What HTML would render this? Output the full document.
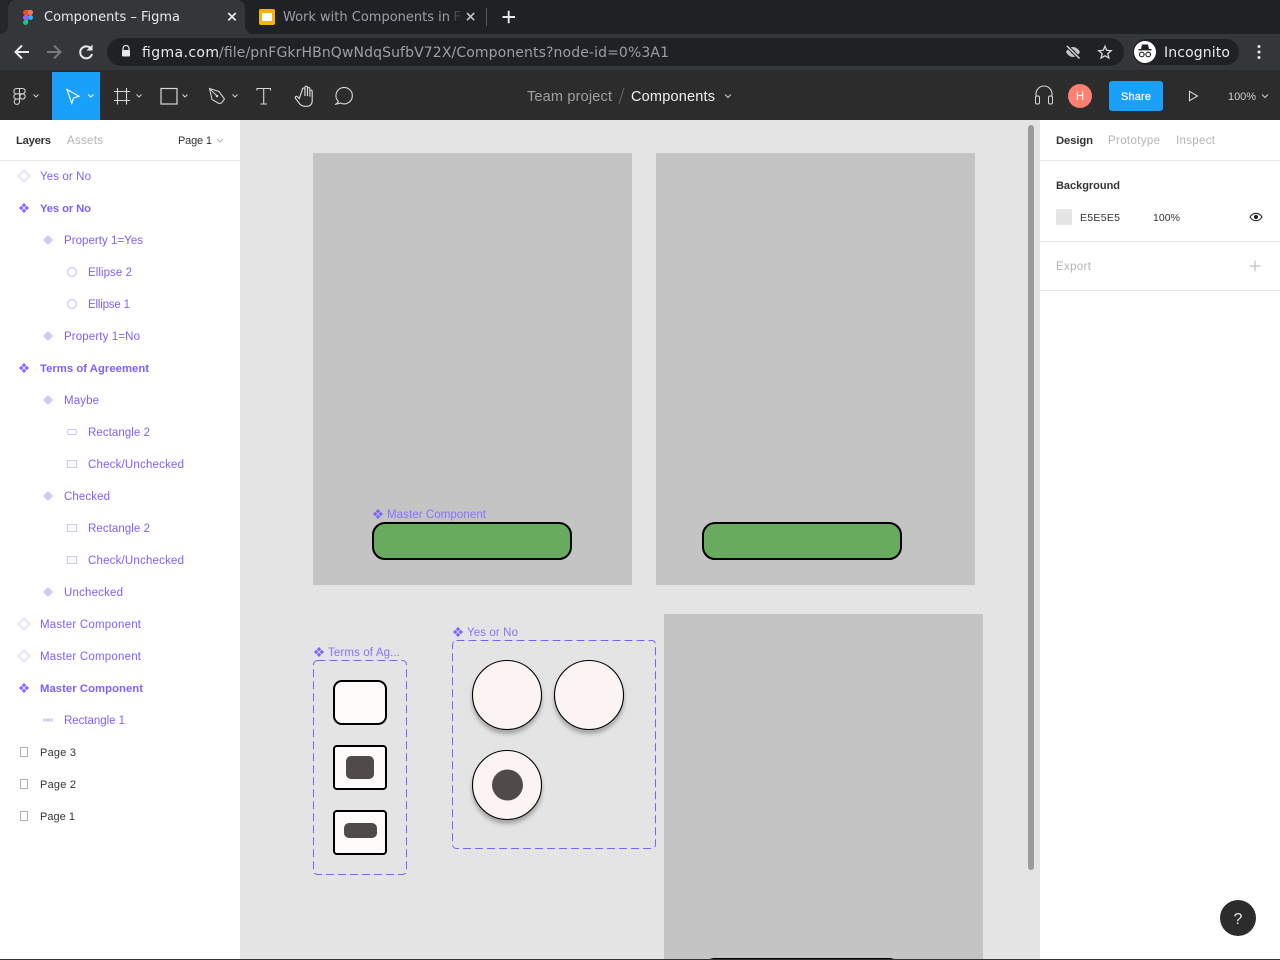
<!DOCTYPE html>
<html><head><meta charset="utf-8"><title>Components – Figma</title>
<style>
html,body{margin:0;padding:0;width:1280px;height:960px;overflow:hidden;background:#e5e5e5}
svg{display:block;position:absolute;left:0;top:0}
.c{font-family:"DejaVu Sans",sans-serif}
.f{font-family:"Liberation Sans",sans-serif}
.l{font-family:"Liberation Sans",sans-serif;font-size:11.5px;fill:#7b61ff}
.b{font-weight:700;font-size:11.3px}
.k{fill:#333}
.ic{fill:none;stroke:#cfc6ff;stroke-width:1.2}
.ch{fill:none;stroke:#b0b0b0;stroke-width:1}
</style></head><body>
<svg width="1280" height="960" viewBox="0 0 1280 960" xmlns="http://www.w3.org/2000/svg">
<defs>
<filter id="s" x="-30%" y="-30%" width="160%" height="170%"><feDropShadow dx="0" dy="4" stdDeviation="2" flood-color="#000" flood-opacity=".28"/></filter>
<g id="comp"><path d="M0-5 2.2-2.8 0-.6-2.2-2.8ZM0 .6 2.2 2.8 0 5-2.2 2.8ZM-2.800-2.200-.6 0-2.800 2.200-5 0ZM2.800-2.200 5 0 2.800 2.200.6 0Z" fill="#7b61ff"/></g>
<g id="inst"><path d="M0-5 5 0 0 5-5 0Z" fill="#cfc6ff"/></g>
<g id="hollow"><path d="M0-5.500 5.500 0 0 5.500-5.500 0Z" fill="none" stroke="#d7d0ff" stroke-width="1.100"/></g>
</defs>

<!-- browser chrome -->
<rect width="1280" height="34" fill="#202124"/>
<rect x="0" y="34" width="1280" height="36" fill="#35363a"/>
<path d="M0 0H8V26a8 8 0 0 1-8 8Z" fill="#26272a"/>
<path d="M0 34a8 8 0 0 0 8-8V8a8 8 0 0 1 8-8H237a8 8 0 0 1 8 8V26a8 8 0 0 0 8 8Z" fill="#35363a"/>
<!-- figma favicon -->
<path d="M28 10H25.500a2.500 2.500 0 0 0 0 5H28Z" fill="#f24e1e"/>
<path d="M28 10h2.500a2.500 2.500 0 0 1 0 5H28Z" fill="#ff7262"/>
<path d="M28 15H25.500a2.500 2.500 0 0 0 0 5H28Z" fill="#a259ff"/>
<circle cx="30.500" cy="17.500" r="2.500" fill="#1abcfe"/>
<path d="M28 20H25.500a2.500 2.500 0 1 0 2.500 2.500Z" fill="#0acf83"/>
<text class="c" x="44" y="21" font-size="13" fill="#e8eaed" textLength="136">Components – Figma</text>
<path d="M228.300 13 235.700 20.400M235.700 13 228.300 20.400" stroke="#e8eaed" stroke-width="1.700"/>
<!-- tab 2 -->
<rect x="259" y="9" width="16" height="16" rx="2" fill="#f4b400"/>
<rect x="262" y="13" width="10" height="8" fill="#fff"/>
<text class="c" x="283" y="21" font-size="13" fill="#9aa0a6" textLength="167">Work with Components in</text>
<text class="c" x="453.500" y="21" font-size="13" fill="#4a4c50">F</text>
<path d="M467 13 474.200 20.200M474.200 13 467 20.200" stroke="#c0c3c7" stroke-width="1.600"/>
<rect x="486" y="8" width="1" height="18" fill="#55585c"/>
<path d="M502.500 17h12.500M508.700 10.800v12.500" stroke="#e8eaed" stroke-width="1.900"/>
<!-- nav -->
<path d="M29 52H16M22 45.500 15.500 52 22 58.500" fill="none" stroke="#e8eaed" stroke-width="2"/>
<path d="M47 52H60M54 45.500 60.500 52 54 58.500" fill="none" stroke="#77797d" stroke-width="2"/>
<path d="M91.500 49.500A6 6 0 1 0 92 54" fill="none" stroke="#e8eaed" stroke-width="2"/>
<path d="M92.500 44.500V50.500H86.500Z" fill="#e8eaed"/>
<rect x="107" y="38" width="1017" height="28" rx="14" fill="#202124"/>
<path d="M123 50.500v-2a3 3 0 0 1 6 0v2" fill="none" stroke="#e8eaed" stroke-width="1.200"/>
<rect x="122" y="50" width="8" height="6.500" rx="1" fill="#e8eaed"/>
<text class="c" x="142" y="57" font-size="14" fill="#e8eaed" textLength="77">figma.com</text>
<text class="c" x="219" y="57" font-size="14" fill="#9aa0a6" textLength="450">/file/pnFGkrHBnQwNdqSufbV72X/Components?node-id=0%3A1</text>
<!-- eye off + star -->
<path d="M1066 52c2-3.500 4.500-5 7-5s5 1.500 7 5c-2 3.500-4.500 5-7 5s-5-1.500-7-5Z" fill="#c4c7c5"/>
<circle cx="1073" cy="52" r="2" fill="#202124"/>
<path d="M1067 46 1079.500 58.500" stroke="#202124" stroke-width="3.500"/>
<path d="M1067 46 1079.500 58.500" stroke="#d6d8da" stroke-width="1.500"/>
<path d="M1105 46.200 1106.700 50.300 1111.200 50.700 1107.800 53.600 1108.900 58 1105 55.700 1101.100 58 1102.200 53.600 1098.800 50.700 1103.300 50.300Z" fill="none" stroke="#d6d8da" stroke-width="1.300"/>
<!-- incognito -->
<rect x="1133" y="39" width="106" height="26" rx="13" fill="#202124"/>
<circle cx="1145" cy="52" r="11" fill="#fff"/>
<path d="M1141 49l1-4.500h6l1 4.500Z" fill="#202124"/><rect x="1138.500" y="49" width="13" height="1.400" fill="#202124"/>
<circle cx="1141.800" cy="54.500" r="2.300" fill="none" stroke="#202124" stroke-width="1.100"/>
<circle cx="1148.200" cy="54.500" r="2.300" fill="none" stroke="#202124" stroke-width="1.100"/>
<text class="c" x="1164" y="57" font-size="14" fill="#e8eaed" textLength="66">Incognito</text>
<circle cx="1259" cy="46.500" r="1.500" fill="#e8eaed"/><circle cx="1259" cy="52" r="1.500" fill="#e8eaed"/><circle cx="1259" cy="57.500" r="1.500" fill="#e8eaed"/>

<!-- figma toolbar -->
<rect x="0" y="70" width="1280" height="50" fill="#2c2c2c"/>
<rect x="52" y="72" width="48" height="48" fill="#18a0fb"/>
<g fill="none" stroke="#cfcfcf" stroke-width="1.100">
<path d="M19.500 88.500h-3a2.650 2.650 0 0 0 0 5.300h3ZM19.500 88.500h3a2.650 2.650 0 0 1 0 5.300h-3ZM19.500 93.800h-3a2.650 2.650 0 0 0 0 5.300h3ZM19.500 99.100h-3a2.650 2.650 0 1 0 3 2.650Z"/>
<circle cx="22.500" cy="96.450" r="2.650"/>
</g>
<g fill="none" stroke="#cfcfcf" stroke-width="1">
<path d="M33.500 94.500 36 97 38.500 94.500M136.500 94.500 139 97 141.500 94.500M182.500 94.500 185 97 187.500 94.500M232.500 94.500 235 97 237.500 94.500M725 94.500 728 97.500 731 94.500" />
</g>
<path d="M67 89.500 79 96.200 73.500 98 71.800 103.500Z" fill="none" stroke="#fff" stroke-width="1.100"/>
<path d="M88 94.500 90.800 97 93.500 94.500" fill="none" stroke="#fff" stroke-width="1.100"/>
<path d="M117.500 88V104.500M126.500 88V104.500M114 91.500H130M114 100.500H130" fill="none" stroke="#d8d8d8" stroke-width="1.100"/>
<rect x="161" y="88.500" width="16" height="15.500" fill="none" stroke="#d8d8d8" stroke-width="1.200"/>
<path d="M209.500 88.500 219 91.500 224.500 99 221.500 103 219 103.500 212 99.500Z" fill="none" stroke="#d0d0d0" stroke-width="1.100"/>
<path d="M209.500 88.500 216.500 95.500" stroke="#d0d0d0" stroke-width="1"/><circle cx="217" cy="96" r="1.300" fill="#d0d0d0"/>
<path d="M257 90.500V88.500H270.500V90.500M263.700 88.500V104M260.500 104H267" fill="none" stroke="#d8d8d8" stroke-width="1.100"/>
<g transform="translate(304 96) scale(1.05) translate(-301.500 -96)">
<path d="M297 98.500l-1.800-1.800c-1.200-1-2.500.2-1.800 1.500l3.600 4.800c1.200 1.800 3 2.800 5.400 2.800h2c3 0 4.900-2.200 4.900-5.200v-9c0-1.500-2.200-1.500-2.200 0v5-7.500c0-1.500-2.300-1.500-2.300 0v7-8.300c0-1.500-2.400-1.500-2.400 0v8.300-6.500c0-1.500-2.400-1.500-2.400 0Z" fill="none" stroke="#d8d8d8" stroke-width="1.100"/>
</g>
<path d="M338.300 101.400A8.200 8.200 0 1 1 340.500 103L335 104.500C336.800 103.800 337.800 102.800 338.300 101.400Z" fill="none" stroke="#d8d8d8" stroke-width="1.100"/>
<text class="f" x="527" y="101" font-size="14.500" fill="#a0a0a0" textLength="85">Team project</text>
<path d="M619 104 624 88" stroke="#666" stroke-width="1"/>
<text class="f" x="631" y="101" font-size="14.500" fill="#f0f0f0" textLength="84">Components</text>
<!-- headphones -->
<path d="M1036 97v-3a8 8 0 0 1 16 0v3" fill="none" stroke="#d8d8d8" stroke-width="1.100"/>
<rect x="1035.500" y="96" width="4" height="8" rx="1.500" fill="none" stroke="#d8d8d8" stroke-width="1"/>
<rect x="1048.500" y="96" width="4" height="8" rx="1.500" fill="none" stroke="#d8d8d8" stroke-width="1"/>
<circle cx="1080" cy="96" r="12" fill="#ff7f72"/>
<text class="f" x="1080" y="100" font-size="11.500" fill="#fff" text-anchor="middle">H</text>
<rect x="1109" y="81" width="54" height="30" rx="3" fill="#18a0fb"/>
<text class="f" x="1121" y="100" font-size="11" fill="#fff" stroke="#fff" stroke-width=".2" textLength="30">Share</text>
<path d="M1189.500 91.300 1197.500 96 1189.500 100.700Z" fill="none" stroke="#d8d8d8" stroke-width="1.100"/>
<text class="f" x="1228" y="100" font-size="11" fill="#cfcfcf" textLength="28">100%</text>
<path d="M1262 94.500 1265 97.500 1268 94.500" fill="none" stroke="#cfcfcf" stroke-width="1"/>

<!-- canvas -->
<rect x="240" y="120" width="800" height="840" fill="#e4e4e4"/>
<rect x="313" y="153" width="319" height="432" fill="#c4c4c4"/>
<rect x="656" y="153" width="319" height="432" fill="#c4c4c4"/>
<rect x="664" y="614" width="319" height="346" fill="#c4c4c4"/>
<rect x="373" y="523" width="198" height="36" rx="12" fill="#68aa5e" stroke="#000" stroke-width="2"/>
<rect x="703" y="523" width="198" height="36" rx="12" fill="#68aa5e" stroke="#000" stroke-width="2"/>
<rect x="703" y="959" width="198" height="36" rx="12" fill="#68aa5e" stroke="#000" stroke-width="2"/>
<use href="#comp" x="378" y="514"/>
<text class="l" x="387" y="518" textLength="99" style="fill:#8872ff">Master Component</text>
<use href="#comp" x="319" y="652"/>
<text class="l" x="328" y="656" textLength="72" style="fill:#8872ff">Terms of Ag...</text>
<use href="#comp" x="458" y="632"/>
<text class="l" x="467" y="636" textLength="51" style="fill:#8872ff">Yes or No</text>
<rect x="313.500" y="660.500" width="93" height="214" rx="4" fill="none" stroke="#7b61ff" stroke-dasharray="8 4"/>
<rect x="452.500" y="640.500" width="203" height="208" rx="4" fill="none" stroke="#7b61ff" stroke-dasharray="8 4"/>
<rect x="334" y="681" width="52" height="43" rx="8" fill="#fefbfa" stroke="#000" stroke-width="2"/>
<rect x="334" y="746" width="52" height="43" rx="3" fill="#fefbfa" stroke="#000" stroke-width="2"/>
<rect x="346" y="756" width="28" height="23" rx="5" fill="#504b4a"/>
<rect x="334" y="811" width="52" height="43" rx="3" fill="#fefbfa" stroke="#000" stroke-width="2"/>
<rect x="344" y="823" width="33" height="15" rx="5" fill="#504b4a"/>
<g filter="url(#s)"><circle cx="507" cy="695" r="34.500" fill="#fbf4f2" stroke="#000" stroke-width="1.100"/></g>
<g filter="url(#s)"><circle cx="589" cy="695" r="34.500" fill="#fbf4f2" stroke="#000" stroke-width="1.100"/></g>
<g filter="url(#s)"><circle cx="507" cy="785" r="34.500" fill="#fbf4f2" stroke="#000" stroke-width="1.100"/></g>
<circle cx="507.500" cy="785" r="15.500" fill="#504b4a"/>
<rect x="1028" y="125" width="6" height="745" rx="3" fill="#9b9b9b"/>

<!-- left panel -->
<rect x="0" y="120" width="240" height="840" fill="#fff"/>
<rect x="0" y="160" width="240" height="1" fill="#e5e5e5"/>
<text class="f k" x="16" y="144" font-size="11.300" font-weight="700" textLength="35">Layers</text>
<text class="f" x="67" y="144" font-size="11.500" fill="#b3b3b3" textLength="36">Assets</text>
<text class="f k" x="178" y="144" font-size="11" textLength="34">Page 1</text>
<path d="M217 139 220 142 223 139" fill="none" stroke="#b3b3b3" stroke-width="1"/>

<use href="#hollow" x="24" y="176"/><text class="l" x="40" y="180" textLength="51">Yes or No</text>
<use href="#comp" x="24" y="208"/><text class="l b" x="40" y="212" textLength="51">Yes or No</text>
<use href="#inst" x="48" y="240"/><text class="l" x="64" y="244" textLength="79">Property 1=Yes</text>
<circle cx="72" cy="272" r="4.500" class="ic"/><text class="l" x="88" y="276" textLength="44">Ellipse 2</text>
<circle cx="72" cy="304" r="4.500" class="ic"/><text class="l" x="88" y="308" textLength="42">Ellipse 1</text>
<use href="#inst" x="48" y="336"/><text class="l" x="64" y="340" textLength="76">Property 1=No</text>
<use href="#comp" x="24" y="368"/><text class="l b" x="40" y="372" textLength="109">Terms of Agreement</text>
<use href="#inst" x="48" y="400"/><text class="l" x="64" y="404" textLength="35">Maybe</text>
<rect x="67.500" y="429.500" width="9" height="5" rx="1.500" fill="none" stroke="#cfc6ff" stroke-width="1"/><text class="l" x="88" y="436" textLength="62">Rectangle 2</text>
<rect x="67.500" y="460.500" width="9" height="7" fill="none" stroke="#cfc6ff" stroke-width="1"/><text class="l" x="88" y="468" textLength="96">Check/Unchecked</text>
<use href="#inst" x="48" y="496"/><text class="l" x="64" y="500" textLength="46">Checked</text>
<rect x="67.500" y="524.500" width="9" height="7" rx="1" fill="none" stroke="#cfc6ff" stroke-width="1"/><text class="l" x="88" y="532" textLength="62">Rectangle 2</text>
<rect x="67.500" y="556.500" width="9" height="7" fill="none" stroke="#cfc6ff" stroke-width="1"/><text class="l" x="88" y="564" textLength="96">Check/Unchecked</text>
<use href="#inst" x="48" y="592"/><text class="l" x="64" y="596" textLength="59">Unchecked</text>
<use href="#hollow" x="24" y="624"/><text class="l" x="40" y="628" textLength="101">Master Component</text>
<use href="#hollow" x="24" y="656"/><text class="l" x="40" y="660" textLength="101">Master Component</text>
<use href="#comp" x="24" y="688"/><text class="l b" x="40" y="692" textLength="103">Master Component</text>
<rect x="43" y="718.500" width="10" height="3" fill="#d7d0ff"/><text class="l" x="64" y="724" textLength="61">Rectangle 1</text>
<rect x="20.500" y="747.500" width="7" height="9" class="ch"/><text class="f k" x="40" y="756" font-size="11" textLength="36">Page 3</text>
<rect x="20.500" y="779.500" width="7" height="9" class="ch"/><text class="f k" x="40" y="788" font-size="11" textLength="36">Page 2</text>
<rect x="20.500" y="811.500" width="7" height="9" class="ch"/><text class="f k" x="40" y="820" font-size="11" textLength="35">Page 1</text>

<!-- right panel -->
<rect x="1040" y="120" width="240" height="840" fill="#fff"/>
<rect x="1040" y="160" width="240" height="1" fill="#e5e5e5"/>
<rect x="1040" y="241" width="240" height="1" fill="#e5e5e5"/>
<rect x="1040" y="290" width="240" height="1" fill="#e5e5e5"/>
<text class="f k" x="1056" y="144" font-size="11.300" font-weight="700" textLength="37">Design</text>
<text class="f" x="1108" y="144" font-size="11.500" fill="#b3b3b3" textLength="52">Prototype</text>
<text class="f" x="1176" y="144" font-size="11.500" fill="#b3b3b3" textLength="39">Inspect</text>
<text class="f k" x="1056" y="189" font-size="11" font-weight="700" textLength="64">Background</text>
<rect x="1056" y="209" width="16" height="16" fill="#e5e5e5"/>
<text class="f k" x="1080" y="221" font-size="10.500" textLength="40">E5E5E5</text>
<text class="f k" x="1153" y="221" font-size="10.500" textLength="27">100%</text>
<path d="M1250 217c1.500-2.500 3.500-3.700 6-3.700s4.500 1.200 6 3.700c-1.500 2.500-3.500 3.700-6 3.700s-4.500-1.200-6-3.700Z" fill="none" stroke="#222" stroke-width="1.100"/>
<circle cx="1256" cy="217" r="2.100" fill="#222"/>
<text class="f" x="1056" y="270" font-size="11.500" fill="#b3b3b3" textLength="35">Export</text>
<path d="M1255 260.500v11M1249.500 266h11" stroke="#b3b3b3" stroke-width="1"/>
<circle cx="1238" cy="918" r="18" fill="#2c2c2c"/>
<text class="f" x="1238" y="924" font-size="16" fill="#e8e8e8" text-anchor="middle">?</text>
<rect x="0" y="959" width="1280" height="1" fill="#333"/>
</svg>
</body></html>
